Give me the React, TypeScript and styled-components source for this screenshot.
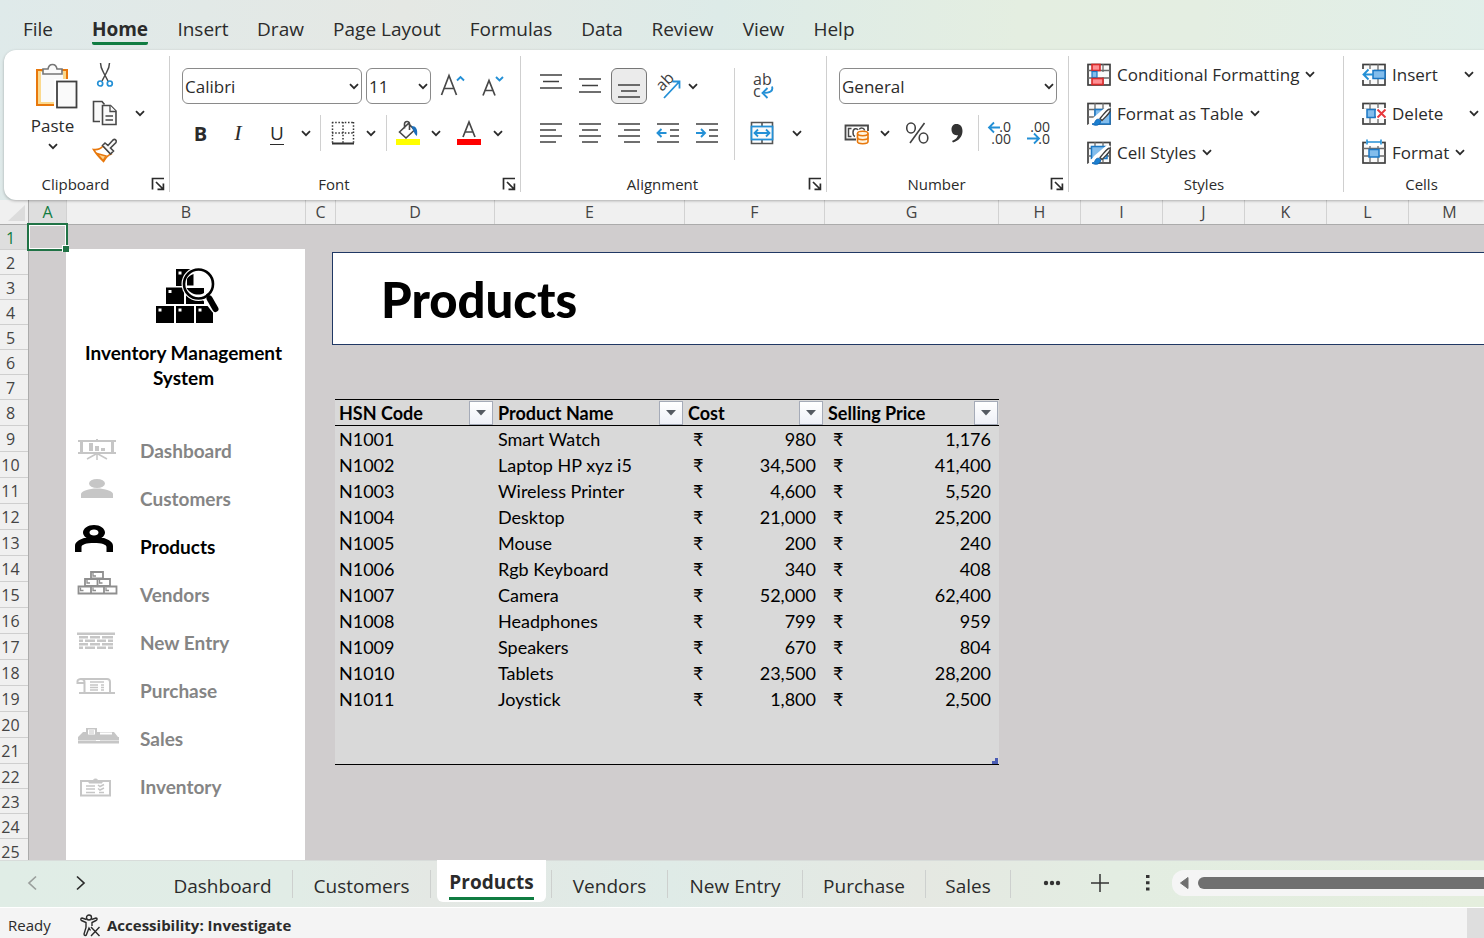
import React from "react";
import styled, { createGlobalStyle, css } from "styled-components";

const ui = `"Open Sans", "Noto Sans", sans-serif`;
const cellFont = `Lato, "Noto Sans", sans-serif`;
const ink = "#2b2b2b";
const blue = "#2490d6";
const green = "#107c41";

const GlobalStyle = createGlobalStyle`
  *, *::before, *::after { box-sizing: border-box; }
  body { margin: 0; background: #f4f4f4; color: ${ink}; font-family: ${ui}; }
  button, select { font: inherit; color: inherit; }
  button { padding: 0; border: 0; background: none; cursor: pointer; }
  svg { display: block; flex: none; overflow: visible; }
`;

const Page = styled.div`
  display: flex;
  flex-direction: column;
  height: 100vh;
  overflow: hidden;
`;

/* ---------- menu and ribbon ---------- */

const Top = styled.header`
  flex: none;
  background: linear-gradient(95deg, #dfeaea 0%, #e5e8e4 27%, #ddebe8 48%, #e4eee1 68%, #e4eee2 80%, #e1efea 100%);
`;

const Menu = styled.nav`
  display: flex;
  height: 50px;
  padding-top: 9px;
`;

const MenuItem = styled.button<{ $width: number; $active?: boolean }>`
  display: flex;
  justify-content: center;
  width: ${(p) => p.$width}px;
  font-size: 19px;
  line-height: 40px;
  white-space: nowrap;
  font-weight: ${(p) => (p.$active ? 700 : 400)};
`;

const MenuLabel = styled.span<{ $active?: boolean }>`
  height: 36px;
  ${(p) =>
    p.$active &&
    css`
      border-bottom: 3px solid ${green};
      border-radius: 2px;
    `}
`;

const Ribbon = styled.div`
  position: relative;
  z-index: 1;
  display: flex;
  height: 150px;
  margin-left: 4px;
  padding: 6px 0 8px;
  overflow: hidden;
  background: #fff;
  border-radius: 12px 0 0 12px;
  box-shadow: 0 1px 3px rgba(0, 0, 0, 0.28);
`;

const Group = styled.section<{ $width: number }>`
  display: flex;
  flex-direction: column;
  flex: none;
  width: ${(p) => p.$width}px;
  border-right: 1px solid #cfcfcf;
`;

const GroupBody = styled.div`
  display: flex;
  flex: 1;
`;

const GroupFooter = styled.footer`
  display: flex;
  align-items: center;
  gap: 4px;
  height: 16px;
  padding-right: 4px;
`;

const Caption = styled.span`
  flex: 1;
  text-align: center;
  font-size: 15px;
  line-height: 16px;
`;

const Rows = styled.div<{ $pad?: number }>`
  display: flex;
  flex-direction: column;
  gap: 11px;
  padding: 12px 0 0 ${(p) => p.$pad ?? 0}px;
`;

const Row = styled.div<{ $gap?: number }>`
  display: flex;
  align-items: center;
  gap: ${(p) => p.$gap ?? 0}px;
  height: 36px;
`;

const Tool = styled.button<{ $width?: number; $on?: boolean }>`
  display: flex;
  align-items: center;
  justify-content: center;
  width: ${(p) => p.$width ?? 39}px;
  height: 36px;
  font-size: 20px;
  ${(p) =>
    p.$on &&
    css`
      width: 36px;
      margin: 0 1px 0 2px;
      background: #ebebeb;
      border: 1px solid #767676;
      border-radius: 6px;
    `}
`;

const Italic = styled.em`
  font-family: "Liberation Serif", serif;
  font-size: 22px;
`;

const Underlined = styled.span`
  border-bottom: 1px solid ${ink};
  font-size: 19px;
  line-height: 22px;
`;

const Rule = styled.span<{ $height: number; $gap: number }>`
  flex: none;
  width: 1px;
  height: ${(p) => p.$height}px;
  margin: 0 ${(p) => p.$gap}px;
  background: #d0d0d0;
`;

const PasteButton = styled.button`
  display: flex;
  flex-direction: column;
  align-items: center;
  width: 80px;
  padding: 7px 0 0 17px;
  font-size: 17px;
  line-height: 34px;
`;

const ClipTools = styled.div`
  display: grid;
  grid-template-columns: 36px 34px;
  grid-template-rows: repeat(3, 38px);
  align-items: center;
  justify-items: center;
  padding-left: 3px;
`;

const SmallTool = styled.button`
  display: grid;
  place-items: center;
  width: 34px;
  height: 34px;
`;

const Field = styled.label<{ $width: number }>`
  display: grid;
  grid-template-columns: 1fr 14px;
  align-items: center;
  width: ${(p) => p.$width}px;
  height: 36px;
  border: 1px solid #8a8a8a;
  border-radius: 6px;
  background: #fff;
  & > svg { grid-area: 1 / 2; justify-self: center; pointer-events: none; }
`;

const Select = styled.select`
  grid-area: 1 / 1 / 2 / 3;
  appearance: none;
  width: 100%;
  height: 34px;
  padding: 0 2px;
  border: 0;
  background: transparent;
  font-size: 17px;
`;

const CommandList = styled.div`
  display: flex;
  flex-direction: column;
  gap: 2px;
  padding-left: 18px;
`;

const Command = styled.button<{ $gap?: number }>`
  display: flex;
  align-items: center;
  height: 37px;
  font-size: 17px;
  white-space: nowrap;
  & > span { margin: 0 ${(p) => p.$gap ?? 6}px 0 6px; }
`;

/* ---------- worksheet ---------- */

const Sheet = styled.main`
  display: grid;
  grid-template: 25px minmax(0, 1fr) / 29px minmax(0, 1fr);
  flex: 1;
  min-height: 0;
  overflow: hidden;
  background: #d0cdce;
`;

const Corner = styled.div`
  display: flex;
  justify-content: flex-end;
  align-items: flex-end;
  padding: 3px;
  background: #f0f0f0;
  border-right: 1px solid #ababab;
  border-bottom: 1px solid #ababab;
`;

const ColumnHeads = styled.div`
  display: flex;
  overflow: hidden;
  background: #f0f0f0;
  border-bottom: 1px solid #ababab;
`;

const ColumnHead = styled.div<{ $width: number; $on?: boolean }>`
  flex: none;
  width: ${(p) => p.$width}px;
  border-right: 1px solid #d2d2d2;
  text-align: center;
  font-size: 16px;
  line-height: 24px;
  color: ${(p) => (p.$on ? green : "#444")};
  background: ${(p) => (p.$on ? "#dedede" : "transparent")};
`;

const RowHeads = styled.div`
  overflow: hidden;
  background: #f0f0f0;
  border-right: 1px solid #ababab;
`;

const RowHead = styled.div<{ $tall?: boolean; $on?: boolean }>`
  height: ${(p) => (p.$tall ? 26 : 25)}px;
  padding-right: 7px;
  border-bottom: 1px solid #cfcfcf;
  text-align: center;
  font-size: 16px;
  line-height: 26px;
  color: ${(p) => (p.$on ? green : "#444")};
  background: ${(p) => (p.$on ? "#dedede" : "transparent")};
`;

const Canvas = styled.div`
  position: relative;
  display: flex;
  min-height: 0;
  font-family: ${cellFont};
  font-variant-ligatures: none;
  color: #000;
`;

const ActiveCell = styled.div`
  position: absolute;
  top: -2px;
  left: -2px;
  width: 41px;
  height: 28px;
  border: 2px solid #217346;
  box-shadow: inset 0 0 0 1px #fff;
  &::after {
    content: "";
    position: absolute;
    right: -3px;
    bottom: -3px;
    width: 7px;
    height: 7px;
    background: #217346;
    border: solid #fff;
    border-width: 1px 0 0 1px;
  }
`;

const Sidebar = styled.aside`
  flex: none;
  width: 239px;
  margin: 24px 0 0 37px;
  padding-top: 20px;
  background: #fff;
`;

const Brand = styled.div`
  display: flex;
  flex-direction: column;
  align-items: center;
  gap: 17px;
  height: 158px;
`;

const BrandName = styled.h2`
  width: 236px;
  margin: 0;
  padding: 0 12px 0 8px;
  text-align: center;
  font-size: 19px;
  font-weight: 700;
  line-height: 25px;
`;

const NavLink = styled.a<{ $active?: boolean }>`
  display: flex;
  gap: 18px;
  height: 48px;
  padding-left: 8px;
  font-size: 19px;
  font-weight: 700;
  line-height: 48px;
  text-decoration: none;
  color: ${(p) => (p.$active ? "#000" : "#858585")};
`;

const Content = styled.div`
  flex: 1;
  min-width: 0;
  padding: 27px 0 0 27px;
`;

const Banner = styled.h1`
  height: 93px;
  margin: 0;
  padding-left: 48px;
  border: 1px solid #203864;
  border-right: 0;
  background: #fff;
  font-size: 49px;
  font-weight: 900;
  line-height: 92px;
`;

const TableWrap = styled.div`
  position: relative;
  width: 664px;
  margin: 54px 0 0 3px;
`;

const Table = styled.table`
  width: 100%;
  table-layout: fixed;
  border-collapse: collapse;
  background: #d9d9d9;
  border-top: 1px solid #000;
  border-bottom: 1px solid #000;
  font-size: 18px;
  line-height: 26px;
`;

const Th = styled.th<{ $width: number }>`
  width: ${(p) => p.$width}px;
  height: 26px;
  padding: 0;
  border-bottom: 1px solid #000;
  text-align: left;
`;

const Heading = styled.div`
  display: flex;
  align-items: center;
  justify-content: space-between;
  height: 25px;
  padding: 0 1px 0 4px;
  white-space: nowrap;
`;

const FilterButton = styled.button`
  display: grid;
  place-items: center;
  width: 24px;
  height: 24px;
  border: 1px solid #a5abb8;
  background: linear-gradient(#fff, #eef0f7);
`;

const Td = styled.td`
  height: 26px;
  padding: 0 4px;
`;

const Money = styled.div`
  display: flex;
  justify-content: space-between;
  padding: 0 4px 0 5px;
`;

const ResizeMark = styled.span`
  position: absolute;
  right: 1px;
  bottom: 1px;
`;

/* ---------- sheet tabs and status bar ---------- */

const TabStrip = styled.nav`
  display: flex;
  flex: none;
  height: 48px;
  border-top: 1px solid #d8dcda;
  border-bottom: 1px solid #fff;
  background: linear-gradient(90deg, #e0ede6 0%, #e1ece6 20%, #e4e8e4 29%, #dfebe7 45%, #e5e8e2 62%, #e3ede2 75%, #e4eedd 100%);
`;

const Arrow = styled.button`
  display: grid;
  place-items: center;
  width: 49px;
  height: 44px;
`;

const TabArrows = styled.div`
  display: flex;
  width: 153px;
  padding-left: 7px;
`;

const SheetTab = styled.button<{ $width: number }>`
  display: flex;
  align-items: center;
  justify-content: center;
  width: ${(p) => p.$width}px;
  height: 28px;
  margin-top: 9px;
  padding-top: 3px;
  border-right: 1px solid #cdd0ce;
  font-size: 19px;
  white-space: nowrap;
`;

const CurrentTab = styled.button`
  width: 109px;
  height: 42px;
  margin: -1px 5px 0 6px;
  background: #fff;
  border-radius: 0 0 6px 6px;
  font-size: 19px;
  font-weight: 700;
  & > span {
    display: inline-block;
    height: 38px;
    border-bottom: 3px solid ${green};
    line-height: 40px;
    white-space: nowrap;
  }
`;

const TabEdge = styled.span`
  width: 1px;
  height: 28px;
  margin-top: 9px;
  background: #cdd0ce;
`;

const TabTools = styled.div`
  display: flex;
  padding-left: 17px;
`;

const TabTool = styled.button`
  display: grid;
  place-items: center;
  width: 48px;
  height: 44px;
`;

const ScrollTrack = styled.div`
  display: flex;
  flex: 1;
  align-items: center;
  gap: 9px;
  height: 26px;
  margin-top: 9px;
  padding-left: 7px;
  background: #f5f5f5;
  border-radius: 12px 0 0 12px;
`;

const ScrollThumb = styled.div`
  flex: 1;
  height: 12px;
  background: #707070;
  border-radius: 6px 0 0 6px;
`;

const Status = styled.footer`
  display: flex;
  flex: none;
  align-items: center;
  height: 30px;
  padding-left: 8px;
  background: #f4f4f4;
  font-size: 15px;
  line-height: 30px;
`;

const StatusText = styled.span`
  width: 72px;
  padding-top: 4px;
`;

const StatusButton = styled.button`
  display: flex;
  align-items: center;
  gap: 6px;
  padding-top: 4px;
  font-weight: 700;
`;

const StatusEnd = styled.span`
  align-self: stretch;
  width: 17px;
  margin-left: auto;
  background: #dedede;
`;

/* ---------- icons ---------- */

const Chevron = () => (
  <svg width="10" height="7" viewBox="0 0 10 7" fill="none" stroke={ink} strokeWidth="1.8" aria-hidden="true">
    <path d="M1 1.2l4 4 4-4" />
  </svg>
);

const Launcher = () => (
  <svg width="14" height="14" viewBox="0 0 14 14" fill="none" stroke={ink} strokeWidth="1.7" aria-hidden="true">
    <path d="M1.5 12.5V1.5h11.5M5 5l7 7M12.4 6.5v5.9H6.5" />
  </svg>
);

const PasteIcon = () => (
  <svg width="50" height="46" viewBox="-8 0 50 46" aria-hidden="true">
    <rect x="1" y="7" width="30" height="35" fill="#fbd98d" stroke="#e8780c" strokeWidth="2" />
    <rect x="5" y="9" width="22" height="30" fill="#fafafa" />
    <path d="M7 11V6h5c1-6 8-6 9 0h5v5z" fill="#fafafa" stroke="#767676" strokeWidth="1.6" />
    <rect x="18" y="16" width="24" height="30" fill="#fff" />
    <rect x="21" y="18.5" width="19.5" height="26" fill="#fafafa" stroke="#404040" strokeWidth="1.8" />
  </svg>
);

const CutIcon = () => (
  <svg width="18" height="26" viewBox="0 0 18 26" fill="none" aria-hidden="true">
    <path d="M4.5 1c0 4 1 6 3 9.500l4.500 8.500M13.500 1c0 4-1 6-3 9.500L6 19" stroke="#484848" strokeWidth="1.5" />
    <circle cx="4.200" cy="21.500" r="2.500" stroke={blue} strokeWidth="1.700" />
    <circle cx="13.800" cy="21.500" r="2.500" stroke={blue} strokeWidth="1.700" />
  </svg>
);

const CopyIcon = () => (
  <svg width="26" height="26" viewBox="0 0 26 26" fill="#fafafa" stroke="#484848" strokeWidth="1.6" aria-hidden="true">
    <path d="M8 21.500H1.500V1.500H10l2.500 3" />
    <path d="M10.500 5.500h8l5.500 5.500v13.500H10.500z" />
    <path d="M18 5.500V11.500h6M13.500 16h7.500M13.500 20h7.500" strokeWidth="1.300" />
  </svg>
);

const PainterIcon = () => (
  <svg width="26" height="26" viewBox="0 0 26 26" fill="none" aria-hidden="true">
    <path d="M1.500 11.500c4 .5 7-.5 9.500-3.500l8 8c-2.500 1-5.500 4-7.500 7.500-3-3-7-7-10-12z" fill="#fff" stroke="#e8780c" strokeWidth="1.600" />
    <path d="M5 15.500l9 2.500-3 4.500z" fill="#fbd08a" stroke="#e8780c" strokeWidth="1.300" />
    <path d="M10.500 7.500l2.500-2.500 3 2.500 5-5.500c2-1.500 4 .5 3 2.500l-5.500 5.500 3 3-3 3z" fill="#fafafa" stroke="#484848" strokeWidth="1.600" />
  </svg>
);

const FontSizeIcon = ({ grow }: { grow?: boolean }) => (
  <svg width="26" height="26" viewBox="0 0 26 26" fill="none" stroke="#484848" strokeWidth="1.700" aria-hidden="true">
    <path d={grow ? "M1.500 22L9 2.500 16.500 22M4 15.500h10" : "M3 22.500L9 7.500l6 15M5 17.500h8"} />
    <path d={grow ? "M17 7.500l3.500-3.500L24 7.500" : "M16 4l3.500 3.500L23 4"} stroke={blue} strokeWidth="1.900" />
  </svg>
);

const BordersIcon = () => (
  <svg width="24" height="24" viewBox="0 0 24 24" fill="none" stroke="#333" aria-hidden="true">
    <path d="M1.500 1v21M22.500 1v21M12 1v21M1 1.500h22M1 12h22" strokeWidth="1.500" strokeDasharray="1.500 1.700" />
    <path d="M1 22.500h22" strokeWidth="2" />
  </svg>
);

const FillIcon = () => (
  <svg width="26" height="26" viewBox="0 0 26 26" fill="none" aria-hidden="true">
    <path d="M4.500 12l9-8.500 6 6.500-8.500 8zM9.500 8.500V4c0-3 5-3.500 5 0v6" stroke="#484848" strokeWidth="1.600" />
    <path d="M16.500 6c4.500 0 6.500 3 5.500 10-2-1-3-4-4-6z" fill="#1b6fbb" />
    <rect x="1" y="19" width="24" height="6" fill="#ffff00" />
  </svg>
);

const FontColorIcon = () => (
  <svg width="26" height="26" viewBox="0 0 26 26" fill="none" aria-hidden="true">
    <path d="M7 17L13 2l6 15M9 12h8" stroke="#484848" strokeWidth="1.700" />
    <rect x="1" y="19" width="24" height="6" fill="#ff0000" />
  </svg>
);

const LinesIcon = ({ d, arrow }: { d: string; arrow?: string }) => (
  <svg width="24" height="24" viewBox="0 0 24 24" fill="none" stroke="#404040" strokeWidth="1.700" aria-hidden="true">
    <path d={d} />
    {arrow && <path d={arrow} stroke={blue} strokeWidth="1.900" />}
  </svg>
);

const OrientationIcon = () => (
  <svg width="26" height="28" viewBox="0 0 26 28" aria-hidden="true">
    <text x="7" y="20" fontSize="16" fontFamily={ui} fill="#404040" transform="rotate(-45 7 20)">ab</text>
    <path d="M9 26L24 10M17.500 9.500H24.500V16.500" fill="none" stroke={blue} strokeWidth="1.800" />
  </svg>
);

const WrapIcon = () => (
  <svg width="24" height="28" viewBox="0 0 24 28" aria-hidden="true">
    <text x="2" y="13" fontSize="16" fontFamily={ui} fill="#404040">ab</text>
    <text x="2" y="25" fontSize="16" fontFamily={ui} fill="#404040">c</text>
    <path d="M21 14.500c1.500 4.500-2 6.500-9.500 6.500M16.500 16l-5 5 5 5" fill="none" stroke={blue} strokeWidth="1.900" />
  </svg>
);

const MergeIcon = () => (
  <svg width="24" height="24" viewBox="0 0 24 24" fill="none" aria-hidden="true">
    <path d="M1.500 1.500h21v21h-21zM12 1.500v21" stroke="#555" strokeWidth="1.600" />
    <rect x="1.500" y="5.500" width="21" height="13" fill="#fafafa" stroke={blue} strokeWidth="1.800" />
    <path d="M4.500 12h15M8 8.500L4.500 12 8 15.500M16 8.500l3.500 3.500L16 15.500" stroke={blue} strokeWidth="1.800" />
  </svg>
);

const AccountingIcon = () => (
  <svg width="26" height="24" viewBox="0 0 26 24" fill="none" aria-hidden="true">
    <path d="M12 18.500H1.500V4.500h22.500V10" stroke="#484848" strokeWidth="1.800" />
    <path d="M7.500 7.500H4.500v8h3M14 9c-1-2-5-2-5 2.500 0 2 .5 3.500 2 4M15.500 8.500c0-2 5-2 5 1" stroke="#484848" strokeWidth="1.500" />
    <path d="M13.500 12.500v8c0 3 10.500 3 10.500 0v-8" fill="#fff4df" stroke="#e8780c" strokeWidth="1.600" />
    <ellipse cx="18.750" cy="12.500" rx="5.250" ry="2.200" fill="#fff4df" stroke="#e8780c" strokeWidth="1.600" />
    <path d="M13.500 16.500c0 3 10.500 3 10.500 0" stroke="#e8780c" strokeWidth="1.600" />
  </svg>
);

const PercentIcon = () => (
  <svg width="24" height="24" viewBox="0 0 24 24" fill="none" stroke="#404040" strokeWidth="1.600" aria-hidden="true">
    <ellipse cx="6" cy="7" rx="4.300" ry="5" />
    <ellipse cx="18.500" cy="17" rx="4.300" ry="5" />
    <path d="M19.500 2L5 22" />
  </svg>
);

const CommaIcon = () => (
  <svg width="14" height="20" viewBox="0 0 14 20" fill="#333" aria-hidden="true">
    <path d="M6.500 1C10 1 12.500 3.500 12.500 8c0 5.500-4 10-9.500 11.500L2 18c3.500-1.500 5.500-3.500 6-6C4.500 13 1.500 10.500 1.500 6.500 1.500 3 3.500 1 6.500 1z" />
  </svg>
);

const DecimalIcon = ({ more }: { more?: boolean }) => (
  <svg width="26" height="26" viewBox="0 0 26 26" aria-hidden="true">
    <text x="24" y="12" textAnchor="end" fontSize="14" fontFamily={ui} fill="#333">{more ? ".0" : ".00"}</text>
    <text x="24" y="24" textAnchor="end" fontSize="14" fontFamily={ui} fill="#333">{more ? ".00" : ".0"}</text>
    <path
      d={more ? "M13 7.500H2M7 2.500l-5 5 5 5" : "M1 18.500h11.500M8 13.500l5 5-5 5"}
      fill="none"
      stroke={blue}
      strokeWidth="1.800"
    />
  </svg>
);

const gridLines = "M1 7.500h22M1 15h22M8 1v20.500M16 1v20.500";

const GridIcon = ({ children }: { children: React.ReactNode }) => (
  <svg width="24" height="24" viewBox="0 0 24 24" fill="none" aria-hidden="true">
    <rect x="1" y="1.500" width="22" height="20.500" fill="#fafafa" stroke="#404040" strokeWidth="1.700" />
    <path d={gridLines} stroke="#6a6a6a" strokeWidth="1.300" />
    {children}
  </svg>
);

const Brush = () => (
  <>
    <path d="M24 5L12 19l-5 5H0l7-9L20 4z" fill="#fff" />
    <path d="M23 7.500c-1.500-1-3 .5-10 9l2 2c8-7.500 9-9.500 8-11z" fill="#fff" stroke="#404040" strokeWidth="1.300" />
    <path d="M13.500 18.500c-2-2.500-5-1-5.500 1.500-.3 1-1.500 2-3 2 4 2.500 9 1 8.500-3.500z" fill="#1b7fd0" stroke="#0f66b5" />
  </>
);

const ConditionalIcon = () => (
  <GridIcon>
    <rect x="5" y="1.500" width="8" height="6" fill="#ff8f93" stroke="#d92a2a" strokeWidth="1.600" />
    <rect x="5" y="8.500" width="5" height="6" fill="#83bdec" stroke="#1b77c4" strokeWidth="1.200" />
    <path d="M11 9h9v5h-9z" fill="#fafafa" />
    <rect x="5" y="15.500" width="11" height="6" fill="#ff8f93" stroke="#d92a2a" strokeWidth="1.600" />
  </GridIcon>
);

const TableFormatIcon = () => (
  <GridIcon>
    <path d="M8 7.500h15v14.500H8z" fill="#83bdec" stroke="#1b77c4" strokeWidth="1.500" />
    <Brush />
  </GridIcon>
);

const CellStyleIcon = () => (
  <GridIcon>
    <path d="M4.500 5.500H20v12H4.500z" fill="#83bdec" stroke="#1b77c4" strokeWidth="1.500" />
    <Brush />
  </GridIcon>
);

const InsertCellsIcon = () => (
  <GridIcon>
    <rect x="0" y="6" width="12" height="11" fill="#fff" />
    <rect x="11" y="7.500" width="12" height="8" fill="#83bdec" stroke="#1b77c4" strokeWidth="1.500" />
    <path d="M11 11.500H1.500M6.500 6.500l-5 5 5 5" stroke={blue} strokeWidth="1.900" />
  </GridIcon>
);

const DeleteCellsIcon = () => (
  <GridIcon>
    <rect x="0" y="7" width="5" height="9" fill="#fff" />
    <rect x="14" y="6" width="10" height="11" fill="#fff" />
    <rect x="5" y="7.500" width="8" height="8" fill="#83bdec" stroke="#1b77c4" strokeWidth="1.500" />
    <path d="M15.500 7.500l8 8M23.500 7.500l-8 8" stroke="#e8383d" strokeWidth="1.900" />
  </GridIcon>
);

const FormatCellsIcon = () => (
  <GridIcon>
    <rect x="4" y="0" width="16" height="5" fill="#fff" />
    <path d="M5 1h14M5-1.500v5M19-1.500v5" stroke={blue} strokeWidth="1.600" />
    <rect x="7" y="8.500" width="10" height="7.500" fill="#83bdec" stroke="#1b77c4" strokeWidth="1.500" />
  </GridIcon>
);

const LogoIcon = () => (
  <svg width="68" height="54" viewBox="-4 0 68 54" aria-hidden="true">
    <path d="M0 37h18v17H0zM20 37h18v17H20zM40 37h17v17H40zM10 18.500h18v16.500H10zM30 18.500h18v16.500H30zM20 0h18v17H20z" />
    <path d="M2.500 39.500h3v3h-3zM22.500 39.500h3v3h-3zM42.500 39.500h3v3h-3zM12.500 21h3v3h-3zM22.500 2.500h3v3h-3z" fill="#fff" />
    <path d="M50 26l11 14" stroke="#fff" strokeWidth="11" />
    <circle cx="42.500" cy="15" r="17" fill="#fff" />
    <path d="M30.500 19h17.500v5c-5 3-13 2-17.500-5zM31 10c1-2 3-4 6.500-5v11.500H31z" />
    <circle cx="42.500" cy="15" r="14.500" fill="none" stroke="#000" strokeWidth="2.600" />
    <path d="M51 27l2-1" stroke="#000" strokeWidth="4" />
    <path d="M53.500 29.500l6 10.500" stroke="#000" strokeWidth="6" strokeLinecap="round" />
  </svg>
);

const light = "#c6c6c6";

const navIcons: Record<string, React.ReactNode> = {
  Dashboard: (
    <g fill={light}>
      <path d="M4 13h18v-1h2v1h18v2H4zM6 15h3v10H6zM37 15h3v10h-3zM4 25h38v2H4zM15 16h4v8h-4zM21 19h4v5h-4zM27 21h4v3h-4z" />
      <path d="M23 27v6M22 27l-9 5M24 27l9 5" stroke={light} strokeWidth="1.500" />
    </g>
  ),
  Customers: (
    <g fill={light}>
      <ellipse cx="23" cy="8.500" rx="8" ry="4.500" />
      <path d="M7 23v-4c0-3 8-5.500 16-5.500s16 2.500 16 5.500v4z" />
    </g>
  ),
  Products: (
    <g fill="#000" fillRule="evenodd">
      <path d="M20 2c6 0 11 3.500 11 7.500S26 17 20 17 9 13.500 9 9.500 14 2 20 2zm0 4.500c-2.500 0-4.500 1.300-4.500 3s2 3 4.500 3 4.500-1.300 4.500-3-2-3-4.500-3z" />
      <path d="M1 29v-6c0-4 4-6 9-8h20c5 2 9 4 9 8v6h-6.500v-5c0-2.500-5-4-12.500-4s-12.500 1.500-12.500 4v5z" />
    </g>
  ),
  Vendors: (
    <g fill="#fff" stroke="#8f8f8f" strokeWidth="1.800">
      <path d="M17 1h12v6.500H17zM11 8h12.500v7H11zM23.500 8H36v7H23.500zM4.500 15.500H17v7H4.500zM17 15.500h13v7H17zM30 15.500h12.500v7H30z" />
      <path d="M19 2v3h3M13 9v3h3M25.500 9v3h3M6.500 16.500v3h3M19 16.500v3h3M32 16.500v3h3" fill="none" strokeWidth="1.300" />
    </g>
  ),
  "New Entry": (
    <g fill={light}>
      <path d="M3 13.500h38V16H3z" />
      <path d="M5 17h9v2.500H5zM16 17h10v2.500H16zM28 17h11v2.500H28zM5 20.500h4V23H5zM11 20.500h10V23H11zM23 20.500h9V23h-9zM34 20.500h5V23h-5zM5 24h9v2.500H5zM16 24h10v2.500H16zM28 24h11v2.500H28zM5 27.500h4V30H5zM11 27.500h10V30H11zM23 27.500h9V30h-9zM34 27.500h5V30h-5z" />
    </g>
  ),
  Purchase: (
    <g fill="none" stroke={light} strokeWidth="2">
      <path d="M5 26h36M10.500 26V15c0-4-7-3.500-7-1v2h6M7 12h26c2 0 3 1 3 3v10" />
      <path d="M16 15h14M16 18h8M16 20.500h8M16 23h8M27 18h3M27 20.500h3M27 23h3" strokeWidth="1.300" />
    </g>
  ),
  Sales: (
    <g fill={light}>
      <path d="M4 22l5-5h3v-4h11v4h17l4 5zM4 22h41v3.500H4zM4 26h41v2.500H4z" />
      <path d="M14 14.500h7v5h-7zM26 17.500h12v2H26zM22 25h4v1h-4z" fill="#fff" />
      <path d="M15 16h5M15 18h5" stroke={light} />
    </g>
  ),
  Inventory: (
    <g fill="none" stroke={light}>
      <path d="M15 18H7v14.500h29V18h-8" strokeWidth="2" />
      <path d="M15 17.500h4c1-2 4-2 5 0h4v2.500H15z" fill={light} />
      <path d="M12 23h9M12 26h9M12 29.500h9M24 22l2 1.500 4-2M24 25.500l2 1.500 4-2M25 29.500h5" strokeWidth="1.500" />
    </g>
  ),
};

const AccessibilityIcon = () => (
  <svg width="21" height="23" viewBox="0 0 21 23" fill="none" stroke={ink} strokeWidth="1.400" aria-hidden="true">
    <circle cx="9" cy="3.500" r="2.500" />
    <path d="M6.500 5.500L2 4C.5 4 .5 6 1.500 6.500L6 8.500v5L4 20c0 2 2 2 2.500.5L9 14l1.500 2.500M11.500 5.500L16 4c1.500 0 1.500 2 0 2.500L12 8.500V12" />
    <path d="M11 13l8.500 9M19.500 13L11 22" />
  </svg>
);

/* ---------- data ---------- */

const menu: [string, number][] = [
  ["File", 76], ["Home", 88], ["Insert", 78], ["Draw", 77], ["Page Layout", 136],
  ["Formulas", 112], ["Data", 70], ["Review", 91], ["View", 71], ["Help", 70],
];

const columns: [string, number][] = [
  ["A", 38], ["B", 239], ["C", 30], ["D", 159], ["E", 190], ["F", 140], ["G", 174],
  ["H", 82], ["I", 82], ["J", 82], ["K", 82], ["L", 82], ["M", 82],
];

const rows = Array.from({ length: 25 }, (_, i) => i + 1);

const products: [string, string, string, string][] = [
  ["N1001", "Smart Watch", "980", "1,176"],
  ["N1002", "Laptop HP xyz i5", "34,500", "41,400"],
  ["N1003", "Wireless Printer", "4,600", "5,520"],
  ["N1004", "Desktop", "21,000", "25,200"],
  ["N1005", "Mouse", "200", "240"],
  ["N1006", "Rgb Keyboard", "340", "408"],
  ["N1007", "Camera", "52,000", "62,400"],
  ["N1008", "Headphones", "799", "959"],
  ["N1009", "Speakers", "670", "804"],
  ["N1010", "Tablets", "23,500", "28,200"],
  ["N1011", "Joystick", "1,800", "2,500"],
];

const headings: [string, number][] = [
  ["HSN Code", 159], ["Product Name", 190], ["Cost", 140], ["Selling Price", 175],
];

/* ---------- parts ---------- */

const Drop = ({ label, width }: { label: string; width: number }) => (
  <Tool $width={width} aria-label={label}><Chevron /></Tool>
);

const RibbonGroup = ({ name, width, launcher, children }: {
  name: string; width: number; launcher?: boolean; children: React.ReactNode;
}) => (
  <Group $width={width} aria-label={name}>
    <GroupBody>{children}</GroupBody>
    <GroupFooter>
      <Caption>{name}</Caption>
      {launcher && <button aria-label={`${name} settings`}><Launcher /></button>}
    </GroupFooter>
  </Group>
);

const Choice = ({ label, width, value }: { label: string; width: number; value: string }) => (
  <Field $width={width}>
    <Select aria-label={label} defaultValue={value}><option>{value}</option></Select>
    <Chevron />
  </Field>
);

export default function App() {
  return (
    <Page>
      <GlobalStyle />
      <Top>
        <Menu aria-label="Ribbon tabs">
          {menu.map(([name, width]) => (
            <MenuItem key={name} $width={width} $active={name === "Home"}>
              <MenuLabel $active={name === "Home"}>{name}</MenuLabel>
            </MenuItem>
          ))}
        </Menu>
        <Ribbon>
          <RibbonGroup name="Clipboard" width={166} launcher>
            <PasteButton><PasteIcon />Paste<Chevron /></PasteButton>
            <ClipTools>
              <SmallTool aria-label="Cut"><CutIcon /></SmallTool><span />
              <SmallTool aria-label="Copy"><CopyIcon /></SmallTool>
              <SmallTool aria-label="Copy options"><Chevron /></SmallTool>
              <SmallTool aria-label="Format Painter"><PainterIcon /></SmallTool>
            </ClipTools>
          </RibbonGroup>

          <RibbonGroup name="Font" width={351} launcher>
            <Rows $pad={12}>
              <Row $gap={4}>
                <Choice label="Font name" width={180} value="Calibri" />
                <Choice label="Font size" width={65} value="11" />
                <Tool $width={36} aria-label="Increase font size"><FontSizeIcon grow /></Tool>
                <Tool $width={36} aria-label="Decrease font size"><FontSizeIcon /></Tool>
              </Row>
              <Row>
                <Tool $width={37}><b>B</b></Tool>
                <Tool $width={38}><Italic>I</Italic></Tool>
                <Tool $width={40}><Underlined>U</Underlined></Tool>
                <Drop label="Underline options" width={18} />
                <Rule $height={36} $gap={5} />
                <Tool $width={34} aria-label="Borders"><BordersIcon /></Tool>
                <Drop label="Border options" width={22} />
                <Rule $height={36} $gap={4} />
                <Tool $width={34} aria-label="Fill color"><FillIcon /></Tool>
                <Drop label="Fill options" width={22} />
                <Tool $width={44} aria-label="Font color"><FontColorIcon /></Tool>
                <Drop label="Font color options" width={14} />
              </Row>
            </Rows>
          </RibbonGroup>

          <RibbonGroup name="Alignment" width={306} launcher>
            <Rows $pad={10}>
              <Row>
                <Tool aria-label="Top align"><LinesIcon d="M1 1h22M4 7.500h16M1 14h22" /></Tool>
                <Tool aria-label="Middle align"><LinesIcon d="M1 5h22M4 11.500h16M1 18h22" /></Tool>
                <Tool $on aria-label="Bottom align"><LinesIcon d="M1 11h22M4 17h16M1 23h22" /></Tool>
                <Tool aria-label="Orientation"><OrientationIcon /></Tool>
                <Drop label="Orientation options" width={12} />
              </Row>
              <Row>
                <Tool aria-label="Align left"><LinesIcon d="M1 3h22M1 9h16M1 15h22M1 21h16" /></Tool>
                <Tool aria-label="Center"><LinesIcon d="M1 3h22M4 9h16M1 15h22M4 21h16" /></Tool>
                <Tool aria-label="Align right"><LinesIcon d="M1 3h22M7 9h16M1 15h22M7 21h16" /></Tool>
                <Tool aria-label="Decrease indent">
                  <LinesIcon d="M1 3h22M14 9h9M14 15h9M1 21h22" arrow="M10.500 12H1.500M5.500 8l-4 4 4 4" />
                </Tool>
                <Tool aria-label="Increase indent">
                  <LinesIcon d="M1 3h22M14 9h9M14 15h9M1 21h22" arrow="M1 12h9M6 8l4 4-4 4" />
                </Tool>
              </Row>
            </Rows>
            <Rows><Rule $height={92} $gap={8} /></Rows>
            <Rows>
              <Row><Tool aria-label="Wrap text"><WrapIcon /></Tool></Row>
              <Row>
                <Tool $width={37} aria-label="Merge and center"><MergeIcon /></Tool>
                <Drop label="Merge options" width={34} />
              </Row>
            </Rows>
          </RibbonGroup>

          <RibbonGroup name="Number" width={242} launcher>
            <Rows $pad={12}>
              <Row><Choice label="Number format" width={218} value="General" /></Row>
              <Row>
                <Tool $width={36} aria-label="Accounting format"><AccountingIcon /></Tool>
                <Drop label="Accounting options" width={20} />
                <Tool $width={44} aria-label="Percent style"><PercentIcon /></Tool>
                <Tool $width={36} aria-label="Comma style"><CommaIcon /></Tool>
                <Rule $height={36} $gap={3} />
                <Tool $width={36} aria-label="Increase decimal"><DecimalIcon more /></Tool>
                <Tool $width={42} aria-label="Decrease decimal"><DecimalIcon /></Tool>
              </Row>
            </Rows>
          </RibbonGroup>

          <RibbonGroup name="Styles" width={275}>
            <CommandList>
              <Command><ConditionalIcon /><span>Conditional Formatting</span><Chevron /></Command>
              <Command><TableFormatIcon /><span>Format as Table</span><Chevron /></Command>
              <Command><CellStyleIcon /><span>Cell Styles</span><Chevron /></Command>
            </CommandList>
          </RibbonGroup>

          <RibbonGroup name="Cells" width={160}>
            <CommandList>
              <Command $gap={26}><InsertCellsIcon /><span>Insert</span><Chevron /></Command>
              <Command $gap={26}><DeleteCellsIcon /><span>Delete</span><Chevron /></Command>
              <Command><FormatCellsIcon /><span>Format</span><Chevron /></Command>
            </CommandList>
          </RibbonGroup>
        </Ribbon>
      </Top>

      <Sheet>
        <Corner>
          <svg width="17" height="16" viewBox="0 0 17 16" aria-hidden="true"><path d="M17 0v16H0z" fill="#dcdcdc" /></svg>
        </Corner>
        <ColumnHeads>
          {columns.map(([name, width]) => (
            <ColumnHead key={name} $width={width} $on={name === "A"}>{name}</ColumnHead>
          ))}
        </ColumnHeads>
        <RowHeads>
          {rows.map((n) => (
            <RowHead key={n} $tall={n >= 8 && n <= 21} $on={n === 1}>{n}</RowHead>
          ))}
        </RowHeads>
        <Canvas>
          <Sidebar>
            <Brand>
              <LogoIcon />
              <BrandName>Inventory Management System</BrandName>
            </Brand>
            <nav aria-label="Inventory">
              {Object.keys(navIcons).map((name) => (
                <NavLink key={name} href="#" $active={name === "Products"}>
                  <svg width="48" height="48" viewBox="0 0 48 48" aria-hidden="true">{navIcons[name]}</svg>
                  {name}
                </NavLink>
              ))}
            </nav>
          </Sidebar>
          <Content>
            <Banner>Products</Banner>
            <TableWrap>
              <Table>
                <thead>
                  <tr>
                    {headings.map(([name, width]) => (
                      <Th key={name} $width={width} scope="col">
                        <Heading>
                          {name}
                          <FilterButton aria-label={`Filter ${name}`}>
                            <svg width="10" height="6" viewBox="0 0 10 6" aria-hidden="true"><path d="M0 0h10L5 5.500z" fill="#555a62" /></svg>
                          </FilterButton>
                        </Heading>
                      </Th>
                    ))}
                  </tr>
                </thead>
                <tbody>
                  {products.map(([code, name, cost, price]) => (
                    <tr key={code}>
                      <Td>{code}</Td>
                      <Td>{name}</Td>
                      <Td><Money><span>₹</span><span>{cost}</span></Money></Td>
                      <Td><Money><span>₹</span><span>{price}</span></Money></Td>
                    </tr>
                  ))}
                  <tr><Td /><Td /><Td /><Td /></tr>
                  <tr><Td /><Td /><Td /><Td /></tr>
                </tbody>
              </Table>
              <ResizeMark>
                <svg width="6" height="6" viewBox="0 0 6 6" aria-hidden="true"><path d="M3 0h3v6H0V3h3z" fill="#4a5cb5" /></svg>
              </ResizeMark>
            </TableWrap>
          </Content>
          <ActiveCell />
        </Canvas>
      </Sheet>

      <TabStrip aria-label="Sheets">
        <TabArrows>
          <Arrow aria-label="Previous sheet">
            <svg width="10" height="16" viewBox="0 0 10 16" fill="none" stroke="#9a9f9c" strokeWidth="1.700" aria-hidden="true"><path d="M9 1.500L2 8l7 6.500" /></svg>
          </Arrow>
          <Arrow aria-label="Next sheet">
            <svg width="10" height="16" viewBox="0 0 10 16" fill="none" stroke={ink} strokeWidth="1.700" aria-hidden="true"><path d="M1 1.500L8 8l-7 6.500" /></svg>
          </Arrow>
        </TabArrows>
        <SheetTab $width={140}>Dashboard</SheetTab>
        <SheetTab $width={138}>Customers</SheetTab>
        <CurrentTab aria-current="page"><span>Products</span></CurrentTab>
        <TabEdge />
        <SheetTab $width={116}>Vendors</SheetTab>
        <SheetTab $width={135}>New Entry</SheetTab>
        <SheetTab $width={123}>Purchase</SheetTab>
        <SheetTab $width={85}>Sales</SheetTab>
        <TabTools>
          <TabTool aria-label="More sheets">
            <svg width="18" height="6" viewBox="0 0 18 6" fill="#333" aria-hidden="true"><circle cx="3" cy="3" r="2.200" /><circle cx="9" cy="3" r="2.200" /><circle cx="15" cy="3" r="2.200" /></svg>
          </TabTool>
          <TabTool aria-label="New sheet">
            <svg width="18" height="18" viewBox="0 0 18 18" stroke="#333" strokeWidth="1.500" aria-hidden="true"><path d="M9 0v18M0 9h18" /></svg>
          </TabTool>
          <TabTool aria-label="Resize tabs">
            <svg width="4" height="16" viewBox="0 0 4 16" fill="#333" aria-hidden="true"><path d="M0 0h3.500v3H0zM0 6.300h3.500v3H0zM0 12.600h3.500v3H0z" /></svg>
          </TabTool>
        </TabTools>
        <ScrollTrack>
          <svg width="10" height="14" viewBox="0 0 10 14" aria-hidden="true"><path d="M9 1.500v11L1.500 7z" fill="#707070" stroke="#707070" strokeLinejoin="round" /></svg>
          <ScrollThumb />
        </ScrollTrack>
      </TabStrip>

      <Status>
        <StatusText>Ready</StatusText>
        <StatusButton><AccessibilityIcon />Accessibility: Investigate</StatusButton>
        <StatusEnd />
      </Status>
    </Page>
  );
}
